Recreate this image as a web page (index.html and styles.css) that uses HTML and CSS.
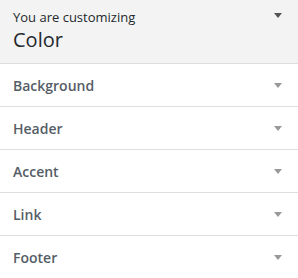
FILE: index.html
```html
<!DOCTYPE html>
<html lang="en">
<head>
    <meta charset="UTF-8">
    <meta name="viewport" content="width=device-width, initial-scale=1.0">
    <title>Customize Color</title>
    <link rel="stylesheet" href="styles.css">
</head>
<body>
    <div class="panel">
        <!-- Заголовок панели -->
        <div class="panel-head">
            <div class="panel-head-text">
                <span class="panel-sub">You are customizing</span>
                <h1 class="panel-title">Color</h1>
            </div>
            <span class="arrow dark"></span>
        </div>

        <!-- Секции -->
        <ul class="sections">
            <li class="section"><span>Background</span><span class="arrow"></span></li>
            <li class="section"><span>Header</span><span class="arrow"></span></li>
            <li class="section"><span>Accent</span><span class="arrow"></span></li>
            <li class="section"><span>Link</span><span class="arrow"></span></li>
            <li class="section"><span>Footer</span><span class="arrow"></span></li>
        </ul>
    </div>
</body>
</html>
```
FILE: styles.css
```css
/* Общие стили */
* {
    margin: 0;
    padding: 0;
    box-sizing: border-box;
}

body {
    font-family: 'Open Sans', 'Noto Sans', sans-serif;
    background-color: #FFFFFF;
    color: #23282d;
    width: 298px;
    height: 278px;
    overflow: hidden;
}

/* Заголовок */
.panel-head {
    display: flex;
    justify-content: space-between;
    align-items: flex-start;
    height: 64px;
    padding: 8px 16px 0 13px;
    background-color: #f3f3f3;
    border-bottom: 1px solid #dddddd;
}

.panel-head-text {
    display: flex;
    flex-direction: column;
}

.panel-sub {
    font-size: 13px;
    line-height: 18px;
    color: #23282d;
}

.panel-title {
    font-size: 20px;
    font-weight: 400;
    line-height: 28px;
    color: #23282d;
}

/* Стрелки */
.arrow {
    width: 0;
    height: 0;
    border-left: 4px solid transparent;
    border-right: 4px solid transparent;
    border-top: 5px solid #999999;
}

.arrow.dark {
    margin-top: 5px;
    border-top-color: #555555;
}

/* Секции */
.sections {
    list-style: none;
}

.section {
    display: flex;
    justify-content: space-between;
    align-items: center;
    height: 43px;
    padding: 0 16px 0 13px;
    border-bottom: 1px solid #dddddd;
    font-size: 14px;
    font-weight: 600;
    color: #555d66;
}

.section:last-child {
    border-bottom: none;
}
```
